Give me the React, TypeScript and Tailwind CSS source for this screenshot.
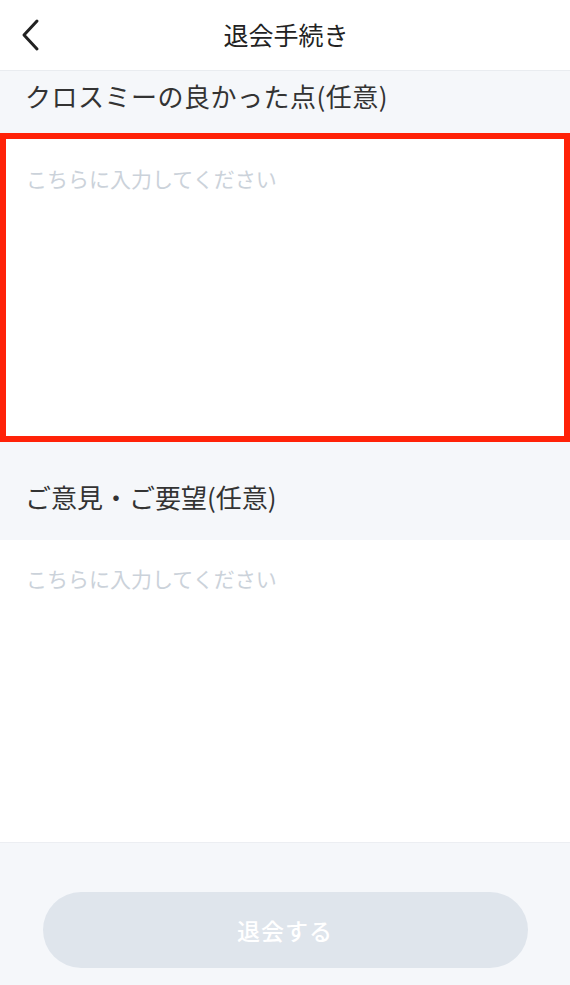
import { useState } from 'react';

const font = { fontFamily: '"Noto Sans CJK JP", "Noto Sans", sans-serif' };

export default function App() {
    const [good, setGood] = useState('');
    const [opinion, setOpinion] = useState('');

    return (
        <div className="w-[570px] h-[985px] flex flex-col bg-[#f5f7fa] overflow-hidden" style={font}>
            {/* Header */}
            <div className="h-[71px] flex-shrink-0 flex items-center bg-white border-b border-[#e9ecf0] relative">
                <button className="w-[60px] h-full flex items-center justify-center pl-[1px] text-[#222]">
                    <svg width="22" height="34" viewBox="0 0 22 34" fill="none">
                        <path d="M17 3 L4 17 L17 31" stroke="currentColor" strokeWidth="3" strokeLinecap="round" strokeLinejoin="round" />
                    </svg>
                </button>
                <div className="flex-1 text-center text-[25px] leading-none text-[#222] pr-[60px] -mt-[2px] pl-[2px]">退会手続き</div>
            </div>

            {/* Good points */}
            <div className="h-[62px] flex-shrink-0 flex items-start pt-[7px] pl-[25px] text-[26px] leading-[36px] text-[#333] tracking-[0.5px]">
                クロスミーの良かった点(任意)
            </div>
            <textarea
                value={good}
                onChange={(e) => setGood(e.target.value)}
                placeholder="こちらに入力してください"
                className="h-[309px] flex-shrink-0 w-full resize-none bg-white border-[6px] border-[#ff2208] pl-[20px] pt-[24px] text-[21px] leading-[30px] text-[#333] placeholder:text-[#cbd2da] outline-none"
                style={font}
            />

            {/* Opinion */}
            <div className="h-[98px] flex-shrink-0 flex items-start pt-[37px] pl-[25px] text-[26px] leading-[36px] text-[#333]">
                ご意見・ご要望(任意)
            </div>
            <textarea
                value={opinion}
                onChange={(e) => setOpinion(e.target.value)}
                placeholder="こちらに入力してください"
                className="h-[302px] flex-shrink-0 w-full resize-none bg-white pl-[26px] pt-[23px] text-[21px] leading-[30px] text-[#333] placeholder:text-[#cbd2da] outline-none"
                style={font}
            />

            {/* Footer */}
            <div className="flex-1 border-t border-[#eceef2] flex justify-center pt-[49px]">
                <button
                    disabled
                    className="w-[485px] h-[76px] rounded-full bg-[#dfe5ec] text-white text-[23px] font-medium tracking-[1px]"
                    style={font}
                >
                    退会する
                </button>
            </div>
        </div>
    );
}
